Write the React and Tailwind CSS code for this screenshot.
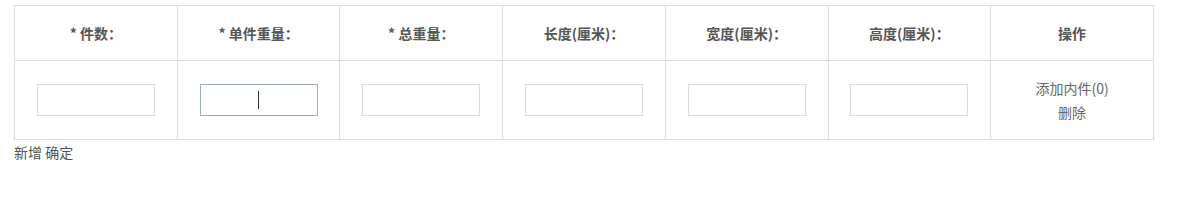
const headers = ["* 件数：", "* 单件重量：", "* 总重量：", "长度(厘米)：", "宽度(厘米)：", "高度(厘米)：", "操作"];

function Field({ focused }) {
  return (
    <div className="relative mx-auto w-[118px] h-[32px]">
      <input
        type="text"
        className={
          "w-full h-full bg-white outline-none border " +
          (focused ? "border-[#9eadbd]" : "border-[#dcdcdc]")
        }
      />
      {focused && <span className="absolute left-[58px] top-[7px] w-px h-[18px] bg-[#333]" />}
    </div>
  );
}

export default function App() {
  return (
    <div className="w-[1182px] h-[208px] bg-white pl-[14px] pt-[5px] text-[14px] text-[#555]" style={{ fontFamily: '"Noto Sans CJK SC", "Liberation Sans", sans-serif' }}>
      <table className="border-collapse table-fixed w-[1140px]">
        <thead>
          <tr className="h-[55px]">
            {headers.map((h) => (
              <th key={h} className="border border-[#dddddd] font-bold text-center text-[#555] align-middle leading-none">
                {h}
              </th>
            ))}
          </tr>
        </thead>
        <tbody>
          <tr className="h-[79px]">
            {[0, 1, 2, 3, 4, 5].map((i) => (
              <td key={i} className="border border-[#dddddd] align-middle">
                <Field focused={i === 1} />
              </td>
            ))}
            <td className="border border-[#dddddd] text-center align-middle text-[#666] leading-[24px]">
              <div>添加内件(0)</div>
              <div>删除</div>
            </td>
          </tr>
        </tbody>
      </table>
      <div className="mt-[3px] leading-[18px] text-[#555]">新增 确定</div>
    </div>
  );
}
